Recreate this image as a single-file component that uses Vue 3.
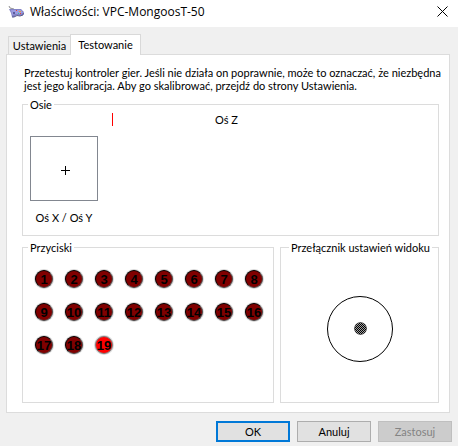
<template>
  <div class="dialog">
    <header class="titlebar">
      <svg class="gamepad" viewBox="0 0 16 13" width="16" height="13">
        <path d="M1 1 L2 3 L6 4" fill="none" stroke="#909090" stroke-width="1" />
        <path d="M1 4 L4 4 L8 4 L13 4 L16 7 L15 10 L12 11 L9 10 L6 12 L4 12 L3 8 Z" fill="#8484c6" />
        <path d="M3 5 L8 5 L13 5 L15 8 L12 9 L7 9 L4 10 Z" fill="#9c9ce0" />
        <path d="M4 12 L6 12 L9 10.5 L12 11 L15 10 L15.5 8" fill="none" stroke="#5a5a8c" stroke-width="1" />
        <rect x="5" y="7" width="2" height="2" fill="#5c5c9c" />
        <rect x="8" y="5" width="1" height="1" fill="#f04030" />
        <rect x="11" y="6" width="2" height="1" fill="#f0a030" />
        <rect x="10" y="8" width="1" height="1" fill="#30c8a0" />
        <rect x="12" y="8" width="1" height="1" fill="#f04030" />
      </svg>
      <h1 class="title">Właściwości: VPC-MongoosT-50</h1>
      <button class="close" type="button" aria-label="Zamknij">
        <svg viewBox="0 0 11 11" width="11" height="11">
          <path d="M0.5 0.5 L10.5 10.5 M10.5 0.5 L0.5 10.5" stroke="#000" fill="none" />
        </svg>
      </button>
    </header>

    <div class="tabs" role="tablist">
      <button
        v-for="tab in tabs"
        :key="tab"
        type="button"
        role="tab"
        :aria-selected="tab === activeTab"
        :class="['tab', tab === activeTab ? 'active' : '']"
        @click="activeTab = tab"
      >{{ tab }}</button>
    </div>

    <main class="panel">
      <p class="intro">Przetestuj kontroler gier. Jeśli nie działa on poprawnie, może to oznaczać, że niezbędna jest jego kalibracja. Aby go skalibrować, przejdź do strony Ustawienia.</p>

      <fieldset class="group">
        <legend>Osie</legend>
        <div class="axes">
          <div class="xy">
            <svg class="xy-box" viewBox="0 0 68 65" width="68" height="65" shape-rendering="crispEdges">
              <rect x="0.5" y="0.5" width="67" height="64" fill="#fff" stroke="#828790" />
              <path d="M31 34.5 H40 M35.5 30 V39" stroke="#000" fill="none" />
            </svg>
            <span class="xy-label">Oś X / Oś Y</span>
          </div>
          <div class="z-axis">Oś Z</div>
        </div>
      </fieldset>

      <div class="row">
        <fieldset class="group">
          <legend>Przyciski</legend>
          <ol class="lamps">
            <li v-for="n in 19" :key="n" :class="['lamp', pressed.includes(n) ? 'on' : '']">{{ n }}</li>
          </ol>
        </fieldset>

        <fieldset class="group pov">
          <legend>Przełącznik ustawień widoku</legend>
          <svg viewBox="0 0 66 66" width="66" height="66">
            <defs>
              <pattern id="dots" width="2" height="2" patternUnits="userSpaceOnUse">
                <rect width="2" height="2" fill="#000" />
                <rect width="1" height="1" fill="#a0a0a0" />
                <rect x="1" y="1" width="1" height="1" fill="#a0a0a0" />
              </pattern>
            </defs>
            <circle cx="33" cy="33" r="32.5" fill="none" stroke="#000" />
            <circle cx="33.5" cy="32.5" r="6" fill="url(#dots)" stroke="#000" stroke-width="0.5" />
          </svg>
        </fieldset>
      </div>
    </main>

    <footer class="actions">
      <button class="btn default" type="button">OK</button>
      <button class="btn" type="button">Anuluj</button>
      <button class="btn" type="button" disabled>Zastosuj</button>
    </footer>
  </div>
</template>

<script setup>
import { ref } from 'vue'

const tabs = ['Ustawienia', 'Testowanie']
const activeTab = ref('Testowanie')
const pressed = ref([19])
</script>

<style>
body {
  background: #f0f0f0;
}
</style>

<style scoped>
.dialog {
  background: #f0f0f0;
  color: #000;
  font-family: Lato, "Liberation Sans", Arial, sans-serif;
  font-size: 11px;
  line-height: 13px;
}

button {
  box-sizing: border-box;
  margin: 0;
  font: inherit;
  color: inherit;
}

.titlebar {
  display: flex;
  align-items: center;
  height: 27px;
  padding: 0 10px 4px 8px;
  box-sizing: border-box;
  background: #fff;
}

.gamepad {
  margin-right: 6px;
}

.title {
  flex: 1;
  margin: 0;
  font-family: "Open Sans", "Noto Sans", sans-serif;
  font-size: 12px;
  font-weight: 400;
  line-height: 16px;
}

.close {
  display: flex;
  padding: 0;
  border: none;
  background: none;
}

.tabs {
  display: flex;
  align-items: flex-end;
  padding: 7px 8px 0;
}

.tab {
  height: 18px;
  width: 62px;
  padding: 0;
  border: 1px solid #d9d9d9;
  border-width: 1px 0 0 1px;
  background: #f0f0f0;
  white-space: nowrap;
}

.tab.active {
  position: relative;
  width: 71px;
  height: 21px;
  margin-bottom: -1px;
  padding-bottom: 2px;
  border-width: 1px 1px 0;
  background: #fff;
}

.panel {
  margin: 0 8px 0 6px;
  padding: 11px 10px 9px 15px;
  border: 1px solid #dcdcdc;
  background: #fff;
}

.intro {
  margin: 0 -8px 6px 2px;
}

.group {
  box-sizing: border-box;
  min-width: 0;
  margin: 0;
  padding: 0;
  border: 1px solid #dcdcdc;
}

legend {
  margin-left: 5px;
  padding: 0 2px;
  white-space: nowrap;
}

.axes {
  display: flex;
  gap: 14px;
  padding: 2px 7px 11px;
}

.xy {
  display: flex;
  flex-direction: column;
  align-items: center;
  gap: 10px;
  padding-top: 23px;
}

.xy-box {
  display: block;
}

.xy-label {
  white-space: nowrap;
}

.z-axis {
  flex: 0 1 227px;
  height: 13px;
  border-left: 1px solid #f00;
  text-align: center;
}

.row {
  display: grid;
  grid-template-columns: minmax(0, 252fr) minmax(0, 159fr);
  gap: 6px;
  margin-top: 5px;
}

.lamps {
  display: grid;
  grid-template-columns: repeat(8, 18px);
  gap: 15px 12px;
  margin: 0;
  padding: 16px 12px 48px;
  list-style: none;
}

.lamp {
  box-sizing: border-box;
  width: 18px;
  height: 18px;
  border: 1px solid;
  border-color: #000 #505050 #505050 #000;
  border-radius: 50%;
  background: #800000;
  box-shadow: 0 0 0 1px #d8d8d8;
  display: flex;
  align-items: center;
  justify-content: center;
  font-family: "Liberation Sans", Arial, sans-serif;
  font-size: 13px;
  font-weight: 700;
}

.lamp.on {
  border-color: #808080;
  background: #f00;
}

.pov svg {
  display: block;
  margin: 42px auto 0;
}

.pov legend {
  margin-left: 8px;
}

.actions {
  display: flex;
  justify-content: flex-end;
  gap: 7px;
  padding: 8px 6px 4px;
}

.btn {
  width: 74px;
  height: 21px;
  padding: 0;
  border: 1px solid #adadad;
  background: #e1e1e1;
}

.btn.default {
  border: 2px solid #0078d7;
}

.btn:disabled {
  border-color: #bfbfbf;
  background: #ccc;
  color: #838383;
}
</style>
